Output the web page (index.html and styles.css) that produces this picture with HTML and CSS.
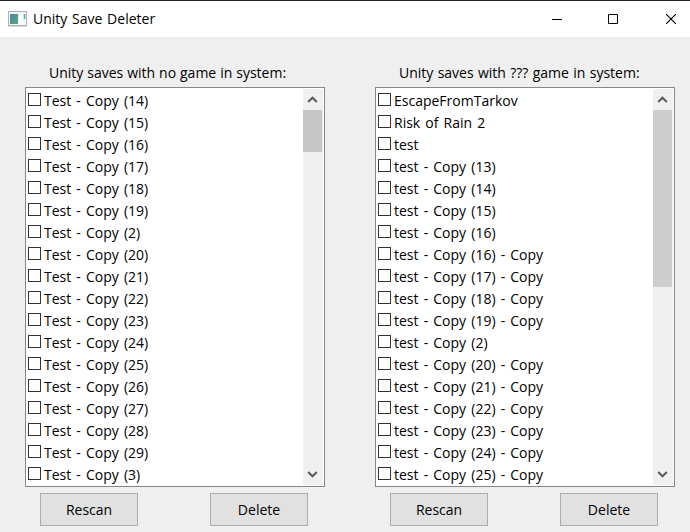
FILE: index.html
```html
<!DOCTYPE html>
<html lang="en">
<head>
<meta charset="utf-8">
<title>Unity Save Deleter</title>
<link rel="stylesheet" href="styles.css">
</head>
<body>
<header class="titlebar">
  <svg class="app-icon" width="19" height="16" viewBox="0 0 19 16">
    <defs><linearGradient id="g" x2="1" y2="1"><stop stop-color="#4a83a8"/><stop offset="1" stop-color="#55a87c"/></linearGradient></defs>
    <rect x=".5" y=".5" width="18" height="14" fill="#f3f5f6" stroke="#adb1b5"/>
    <path d="M0 15.5h19" stroke="#d9dbdc"/>
    <rect x="2" y="3" width="8" height="10" fill="url(#g)"/>
    <rect x="11" y="3" width="4" height="10" fill="#fff"/>
    <path d="M16.500 3v5" stroke="#5fa5a8" stroke-width="1.500"/>
  </svg>
  <h1 class="title">Unity Save Deleter</h1>
  <div class="controls">
    <svg width="10" height="10" viewBox="0 0 10 10"><path d="M0 5.5h10" stroke="#000"/></svg>
    <svg width="10" height="10" viewBox="0 0 10 10"><path d="M.5.5h9v9h-9z" fill="none" stroke="#000"/></svg>
    <svg class="close" width="10" height="10" viewBox="0 0 10 10"><path d="M0 0l10 10M10 0L0 10" stroke="#000" stroke-width="1.1"/></svg>
  </div>
</header>
<main class="panels">
  <section class="panel">
    <h2 class="caption">Unity saves with no game in system:</h2>
    <div class="listbox">
      <ul class="items">
        <li>Test - Copy (14)</li><li>Test - Copy (15)</li><li>Test - Copy (16)</li>
        <li>Test - Copy (17)</li><li>Test - Copy (18)</li><li>Test - Copy (19)</li>
        <li>Test - Copy (2)</li><li>Test - Copy (20)</li><li>Test - Copy (21)</li>
        <li>Test - Copy (22)</li><li>Test - Copy (23)</li><li>Test - Copy (24)</li>
        <li>Test - Copy (25)</li><li>Test - Copy (26)</li><li>Test - Copy (27)</li>
        <li>Test - Copy (28)</li><li>Test - Copy (29)</li><li>Test - Copy (3)</li>
      </ul>
      <div class="scrollbar">
        <svg class="arrow" width="20" height="21" viewBox="0 0 20 21"><path d="M5.2 13l4.3-4.3 4.3 4.3" fill="none" stroke="#5a5a5a" stroke-width="2"/></svg>
        <div class="thumb thumb-short"></div>
        <svg class="arrow arrow-down" width="20" height="21" viewBox="0 0 20 21"><path d="M5.2 8l4.3 4.3L13.800 8" fill="none" stroke="#5a5a5a" stroke-width="2"/></svg>
      </div>
    </div>
    <div class="actions"><button>Rescan</button><button>Delete</button></div>
  </section>
  <section class="panel">
    <h2 class="caption caption-wide">Unity saves with ??? game in system:</h2>
    <div class="listbox">
      <ul class="items">
        <li>EscapeFromTarkov</li><li>Risk of Rain 2</li><li>test</li>
        <li>test - Copy (13)</li><li>test - Copy (14)</li><li>test - Copy (15)</li>
        <li>test - Copy (16)</li><li>test - Copy (16) - Copy</li><li>test - Copy (17) - Copy</li>
        <li>test - Copy (18) - Copy</li><li>test - Copy (19) - Copy</li><li>test - Copy (2)</li>
        <li>test - Copy (20) - Copy</li><li>test - Copy (21) - Copy</li><li>test - Copy (22) - Copy</li>
        <li>test - Copy (23) - Copy</li><li>test - Copy (24) - Copy</li><li>test - Copy (25) - Copy</li>
      </ul>
      <div class="scrollbar">
        <svg class="arrow" width="20" height="21" viewBox="0 0 20 21"><path d="M5.2 13l4.3-4.3 4.3 4.3" fill="none" stroke="#5a5a5a" stroke-width="2"/></svg>
        <div class="thumb thumb-long"></div>
        <svg class="arrow arrow-down" width="20" height="21" viewBox="0 0 20 21"><path d="M5.2 8l4.3 4.3L13.800 8" fill="none" stroke="#5a5a5a" stroke-width="2"/></svg>
      </div>
    </div>
    <div class="actions"><button>Rescan</button><button>Delete</button></div>
  </section>
</main>
</body>
</html>
```
FILE: styles.css
```css
*, *::before { box-sizing: border-box; }
body {
  margin: 0;
  width: 690px;
  height: 532px;
  overflow: hidden;
  background: #efefef;
  color: #000;
  font: 14px/22px "Open Sans", "Noto Sans", sans-serif;
}
svg { display: block; flex: none; }
h1, h2 { margin: 0; font: inherit; white-space: nowrap; }
.titlebar {
  display: flex;
  align-items: center;
  height: 37px;
  padding: 0 14px 0 8px;
  background: #fff;
  border-top: 1px solid #202020;
}
.app-icon { margin-right: 6px; margin-top: -1px; }
.title { word-spacing: 1.1px; }
.controls { display: flex; gap: 46px; margin-left: auto; margin-top: -1px; }
.close { margin-left: 2px; }
.panels { display: flex; gap: 50px; padding: 25px 15px 0 25px; }
.panel { width: 300px; }
.caption { height: 25px; padding-left: 24px; word-spacing: 0.3px; }
.caption-wide { word-spacing: 0.7px; }
.listbox {
  display: flex;
  justify-content: space-between;
  height: 400px;
  padding: 1px 1px 1px 2px;
  background: #fff;
  border: 1px solid #828790;
}
.items { list-style: none; margin: 1px 0 0; padding: 0; word-spacing: 1.5px; }
.items li { display: flex; align-items: center; height: 22px; white-space: nowrap; }
.items li::before {
  content: "";
  width: 13px;
  height: 13px;
  margin: -3px 3px 0 0;
  border: 1px solid #333;
  background: #fff;
}
.scrollbar {
  display: flex;
  flex-direction: column;
  width: 20px;
  background: #f0f0f0;
}
.thumb { width: 19px; }
.thumb-short { height: 42px; background: #c6c6c6; }
.thumb-long { height: 177px; background: #cdcdcd; }
.arrow-down { margin-top: auto; }
.actions { display: flex; gap: 72px; padding: 6px 0 0 15px; }
button {
  width: 98px;
  height: 33px;
  padding: 0;
  color: #000;
  font: inherit;
  background: #e1e1e1;
  border: 1px solid #adadad;
}
```
